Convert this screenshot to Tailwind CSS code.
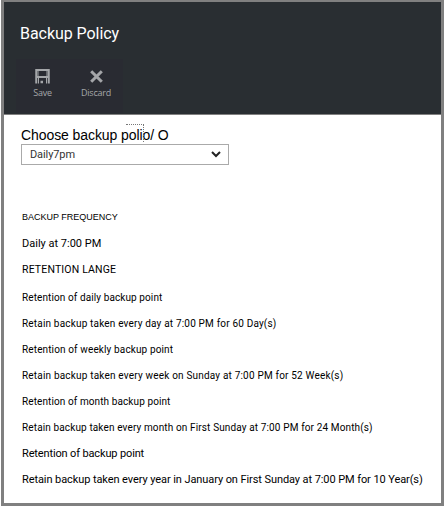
<!DOCTYPE html>
<html lang="en">
<head>
<meta charset="utf-8">
<title>Backup Policy</title>
<script src="https://cdn.jsdelivr.net/npm/@tailwindcss/browser@4"></script>
</head>
<body class="w-[444px] h-[506px] overflow-hidden bg-white font-['Roboto',sans-serif] text-black">
<main class="w-[443px] h-[506px] ml-px border-[3px] border-t-2 border-[#808080] flex flex-col whitespace-nowrap">
  <header class="h-[113px] shrink-0 bg-[#292e32] border-b border-[#808080] pt-[22px]">
    <h1 class="ml-4 h-5 leading-5 text-[16px] tracking-[-0.05px] text-white">Backup Policy</h1>
    <div class="ml-3 mt-[15px] w-[107px] h-[54px] bg-[#292b32] flex text-[#a4a6a9] text-[9px] leading-3 font-['Open_Sans',sans-serif]">
      <button class="w-[53px] flex flex-col items-center pt-[10px]">
        <svg class="w-[15px] h-[15px]" viewBox="0 0 15 15" fill="none" stroke="currentColor"><path d="M1.25 14.5V1h12.5v13.5" stroke-width="2"/><path d="M3 1v6.5h9V1" stroke-width="1"/><path d="M1 8h13" stroke-width="2"/><path d="M3.5 9v5.5M11.5 9v5.5" stroke-width="1"/><path d="M5.5 13h2.5" stroke-width="2.5"/></svg>
        <span class="mt-[3px] tracking-[-0.2px]">Save</span>
      </button>
      <button class="w-[54px] flex flex-col items-center pt-[10px]">
        <svg class="w-[15px] h-[15px]" viewBox="0 0 15 15" fill="none" stroke="currentColor" stroke-width="3"><path d="M2.2 2.2l10.6 10.6M12.8 2.2L2.2 12.8"/></svg>
        <span class="mt-[3px] tracking-[-0.2px]">Discard</span>
      </button>
    </div>
  </header>
  <section class="pl-[17px] pt-[12px]">
    <label class="relative block h-[17px] leading-4 text-[14px] tracking-[-0.08px] font-['Liberation_Sans',sans-serif]">Choose backup polio/ O
      <span class="absolute left-[105px] top-[-3px] w-[18px] h-[18px] border-t border-r border-dotted border-[#777]"></span>
    </label>
    <div class="w-[208px] h-[21px] border border-[#aaa] flex items-center justify-between pl-2 pr-[7px] text-[11px] tracking-[-0.1px] text-[#333]">
      <span class="pt-px">Daily7pm</span>
      <svg class="w-[10px] h-[7px]" viewBox="0 0 10 7" fill="none" stroke="#222" stroke-width="2"><path d="M1 1l4 4 4-4"/></svg>
    </div>
    <div class="mt-[40px] ml-px text-[10px] leading-[26px] flex flex-col">
      <h2 class="h-[26px] -mt-px mb-px text-[9px] tracking-[0px] font-['Liberation_Sans',sans-serif]">BACKUP FREQUENCY</h2>
      <p class="h-[26px] text-[11px]">Daily at 7:00 PM</p>
      <h2 class="h-[28px] text-[10.5px] tracking-[0.16px]">RETENTION LANGE</h2>
      <p class="h-[26px] tracking-[0.1px]">Retention of daily backup point</p>
      <p class="h-[26px] tracking-[0.18px]">Retain backup taken every day at 7:00 PM for 60 Day(s)</p>
      <p class="h-[26px] tracking-[0.13px]">Retention of weekly backup point</p>
      <p class="h-[26px] tracking-[0.19px]">Retain backup taken every week on Sunday at 7:00 PM for 52 Week(s)</p>
      <p class="h-[26px] tracking-[0.1px]">Retention of month backup point</p>
      <p class="h-[26px] tracking-[0.13px]">Retain backup taken every month on First Sunday at 7:00 PM for 24 Month(s)</p>
      <p class="h-[26px] text-[11px] tracking-[-0.14px]">Retention of backup point</p>
      <p class="h-[26px] text-[11px] tracking-[-0.085px]">Retain backup taken every year in January on First Sunday at 7:00 PM for 10 Year(s)</p>
    </div>
  </section>
</main>
</body>
</html>
